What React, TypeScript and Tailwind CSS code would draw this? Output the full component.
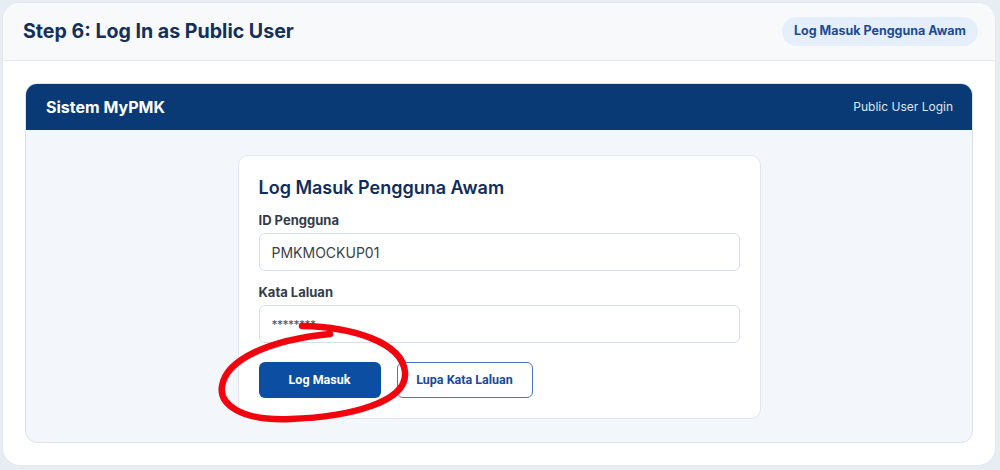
import type React from "react";

const inter = "font-['Inter','Liberation_Sans',sans-serif]";
const roboto = "font-['Roboto','Liberation_Sans',sans-serif]";

const Field: React.FC<{ label: string; value: string; masked?: boolean }> = ({
	label,
	value,
	masked,
}) => (
	<div className="flex flex-col gap-[4px]">
		<label className="text-[13px] leading-[18px] font-bold text-[#333c4a]">
			{label}
		</label>
		<input
			type="text"
			defaultValue={value}
			readOnly
			className={`h-[38px] rounded-[6px] border border-[#d5dfeb] bg-white px-[12px] outline-none ${
				masked ? "text-[12px] tracking-[-0.5px] text-[#4b5563]" : "text-[14px] text-[#3a3f47]"
			}`}
		/>
	</div>
);

const App: React.FC = () => {
	return (
		<div
			className={`relative h-[470px] w-[1000px] overflow-hidden bg-[#e8edf4] pt-[2px] pr-[4px] pb-[4px] pl-[2px] ${inter}`}
		>
			<div className="flex h-full flex-col overflow-hidden rounded-[18px] border border-[#e3e8ef] bg-white">
				{/* Step header */}
				<div className="flex h-[58px] shrink-0 items-center justify-between border-b border-[#e4e9f0] bg-[#f8f9fb] pr-[16px] pl-[20px]">
					<h1 className="text-[19.6px] font-bold text-[#12305a]">
						Step 6: Log In as Public User
					</h1>
					<span className="mr-[1px] rounded-full bg-[#e5effc] px-[12px] py-[5px] text-[12.5px] font-bold text-[#1d4a96]">
						Log Masuk Pengguna Awam
					</span>
				</div>

				{/* Mockup frame */}
				<div className="flex flex-1 flex-col p-[22px]">
					<div className="flex flex-1 flex-col overflow-hidden rounded-[12px] border border-[#dbe3ee] bg-[#f3f6fa]">
						<div className="flex h-[46px] shrink-0 items-center justify-between bg-[#0a3a75] pr-[19px] pl-[20px]">
							<span className="text-[16px] font-bold text-white">Sistem MyPMK</span>
							<span className="text-[12px] text-[#dfe6f0]">Public User Login</span>
						</div>

						<div className="flex flex-1 justify-center pt-[25px]">
							<div className="flex h-[264px] w-[523px] flex-col rounded-[10px] border border-[#dfe6f0] bg-white px-[20px] pt-[20px]">
								<h2 className="text-[18px] leading-[24px] font-semibold text-[#0f2d5b]">
									Log Masuk Pengguna Awam
								</h2>
								<div className="mt-[11px] flex flex-col gap-[12px]">
									<Field label="ID Pengguna" value="PMKMOCKUP01" />
									<Field label="Kata Laluan" value="********" masked />
								</div>
								<div className={`mt-[19px] flex gap-[16px] ${roboto}`}>
									<button
										type="button"
										className="h-[36px] w-[122px] rounded-[6px] bg-[#0b4ea2] text-[12.5px] font-bold text-white"
									>
										Log Masuk
									</button>
									<button
										type="button"
										className="h-[36px] w-[136px] rounded-[6px] border border-[#4a78be] bg-white text-[12.5px] font-bold text-[#184b9b]"
									>
										Lupa Kata Laluan
									</button>
								</div>
							</div>
						</div>
					</div>
				</div>
			</div>

			{/* hand-drawn annotation */}
			<svg
				className="pointer-events-none absolute inset-0"
				width="1000"
				height="470"
				viewBox="0 0 1000 470"
			>
				<path
					d="M 302 326 C 352 327, 402 342, 405 372 C 408 402, 350 417, 290 419 C 240 421, 219 404, 222 386 C 226 360, 268 340, 330 334"
					fill="none"
					stroke="#f0050f"
					strokeWidth="6.5"
					strokeLinecap="round"
				/>
			</svg>
		</div>
	);
};

export default App;
